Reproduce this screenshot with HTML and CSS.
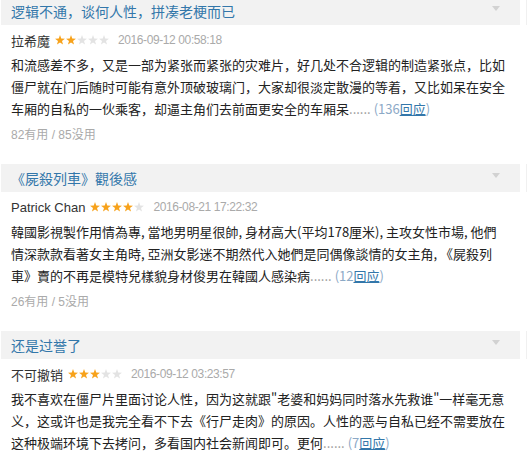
FILE: index.html
```html
<!DOCTYPE html>
<html lang="zh-CN">
<head>
<meta charset="utf-8">
<title>影评</title>
<link rel="stylesheet" href="styles.css">
</head>
<body>
<div class="reviews">
  <section class="review">
    <div class="hd">
      <div class="bar"><h3 class="title">逻辑不通，谈何人性，拼凑老梗而已</h3><span class="toggle"></span></div>
      <span class="edge"></span>
    </div>
    <div class="meta">
      <span class="name">拉希魔</span>
      <svg class="stars" viewBox="0 0 55 10" aria-label="2星">
        <defs><polygon id="star" points="5,0.1 6.23,3.6 9.95,3.69 7,5.95 8.06,9.51 5,7.4 1.94,9.51 3,5.95 0.05,3.69 3.77,3.6"/></defs>
        <use href="#star" x="0" class="on"/><use href="#star" x="11" class="on"/><use href="#star" x="22" class="off"/><use href="#star" x="33" class="off"/><use href="#star" x="44" class="off"/>
      </svg>
      <span class="date">2016-09-12 00:58:18</span>
    </div>
    <p class="content">和流感差不多，又是一部为紧张而紧张的灾难片，好几处不合逻辑的制造紧张点，比如<br>僵尸就在门后随时可能有意外顶破玻璃门，大家却很淡定散漫的等着，又比如呆在安全<br>车厢的自私的一伙乘客，却逼主角们去前面更安全的车厢呆<span class="more">......</span> <a class="reply">(136<u>回应</u>)</a></p>
    <div class="useful">82有用 / 85没用</div>
  </section>

  <section class="review">
    <div class="hd">
      <div class="bar"><h3 class="title">《屍殺列車》觀後感</h3><span class="toggle"></span></div>
      <span class="edge"></span>
    </div>
    <div class="meta">
      <span class="name">Patrick Chan</span>
      <svg class="stars" viewBox="0 0 55 10" aria-label="4星">
        <use href="#star" x="0" class="on"/><use href="#star" x="11" class="on"/><use href="#star" x="22" class="on"/><use href="#star" x="33" class="on"/><use href="#star" x="44" class="off"/>
      </svg>
      <span class="date">2016-08-21 17:22:32</span>
    </div>
    <p class="content">韓國影視製作用情為專, 當地男明星很帥, 身材高大(平均178厘米), 主攻女性市場, 他們<br>情深款款看著女主角時, 亞洲女影迷不期然代入她們是同偶像談情的女主角, 《屍殺列<br>車》賣的不再是模特兒樣貌身材俊男在韓國人感染病<span class="more">......</span> <a class="reply">(12<u>回应</u>)</a></p>
    <div class="useful">26有用 / 5没用</div>
  </section>

  <section class="review">
    <div class="hd">
      <div class="bar"><h3 class="title">还是过誉了</h3><span class="toggle"></span></div>
      <span class="edge"></span>
    </div>
    <div class="meta">
      <span class="name">不可撤销</span>
      <svg class="stars" viewBox="0 0 55 10" aria-label="3星">
        <use href="#star" x="0" class="on"/><use href="#star" x="11" class="on"/><use href="#star" x="22" class="on"/><use href="#star" x="33" class="off"/><use href="#star" x="44" class="off"/>
      </svg>
      <span class="date">2016-09-12 03:23:57</span>
    </div>
    <p class="content">我不喜欢在僵尸片里面讨论人性，因为这就跟"老婆和妈妈同时落水先救谁"一样毫无意<br>义，这或许也是我完全看不下去《行尸走肉》的原因<span class="tc">。</span>人性的恶与自私已经不需要放在<br>这种极端环境下去拷问，多看国内社会新闻即可<span class="tc">。</span>更何<span class="more">......</span> <a class="reply">(7<u>回应</u>)</a></p>
  </section>
</div>
</body>
</html>
```

FILE: styles.css
```css
html, body {
  margin: 0;
  padding: 0;
  background: #ffffff;
}

body {
  font-family: "Liberation Sans", "Noto Sans CJK SC", sans-serif;
  color: #333333;
}

.reviews {
  margin-top: -3px;
  padding-left: 1px;
}

.review {
  margin-bottom: 20px;
}

.hd {
  display: flex;
  height: 28px;
}

.bar {
  width: 519px;
  box-sizing: border-box;
  background: #f2f2f2;
  display: flex;
  align-items: center;
  justify-content: space-between;
  padding: 0 20px 0 10px;
}

.title {
  margin: 0;
  font-family: "Noto Sans CJK SC", sans-serif;
  font-weight: 400;
  font-size: 14px;
  line-height: 28px;
  color: #3377aa;
}

.toggle {
  width: 0;
  height: 0;
  border-left: 4px solid transparent;
  border-right: 4px solid transparent;
  border-top: 5px solid #d2d2d2;
  margin-bottom: 5px;
}

.edge {
  width: 1px;
  margin-left: 6px;
  background: #f0f0f0;
}

.meta {
  display: flex;
  align-items: center;
  height: 18px;
  padding: 6px 0 0 10px;
}

.name {
  font-size: 13px;
  color: #333333;
  margin-right: 5px;
}

.stars {
  display: block;
  width: 55px;
  height: 10px;
  margin-right: 8px;
}

.stars .on {
  fill: #f7a21b;
}

.stars .off {
  fill: #e3e3e3;
}

.date {
  font-size: 12px;
  letter-spacing: -0.4px;
  color: #aaaaaa;
}

.content {
  margin: 5px 0 0;
  padding-left: 10px;
  font-family: "Noto Sans CJK SC", sans-serif;
  font-size: 13px;
  line-height: 22px;
  color: #222222;
  white-space: nowrap;
}

.tc {
  font-family: "Noto Sans CJK TC", sans-serif;
}

.more {
  color: #999999;
}

.reply {
  color: #8ca9c6;
}

.reply u {
  color: #3377aa;
}

.useful {
  margin-top: 6px;
  padding-left: 10px;
  height: 18px;
  line-height: 18px;
  font-size: 12px;
  color: #aaaaaa;
}
```
